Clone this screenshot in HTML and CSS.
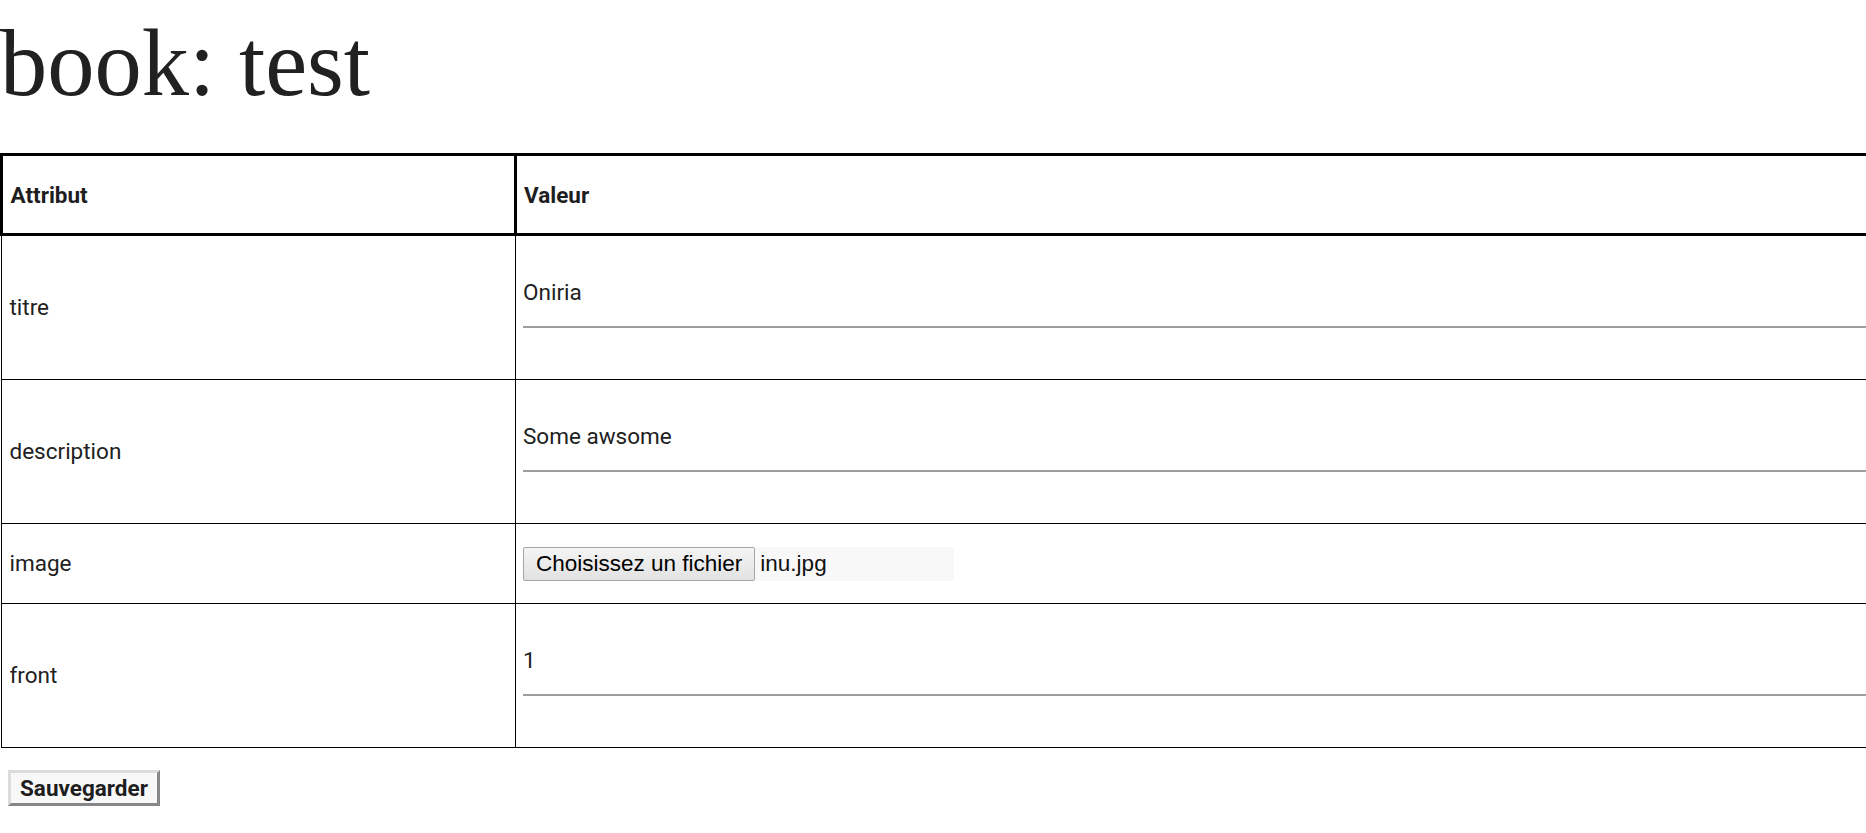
FILE: index.html
```html
<!DOCTYPE html>
<html lang="fr">
<head>
<meta charset="utf-8">
<title>book: test</title>
<link rel="stylesheet" href="styles.css">
</head>
<body>
<h1 class="title">book: test</h1>
<form class="form">
  <table class="attr-table">
    <colgroup><col class="col-attr"><col class="col-val"></colgroup>
    <thead>
      <tr><th>Attribut</th><th>Valeur</th></tr>
    </thead>
    <tbody>
      <tr>
        <td>titre</td>
        <td><div class="field"><input class="text-input" type="text" value="Oniria"></div></td>
      </tr>
      <tr>
        <td>description</td>
        <td><div class="field"><input class="text-input" type="text" value="Some awsome"></div></td>
      </tr>
      <tr>
        <td>image</td>
        <td><div class="file-input"><span class="file-btn">Choisissez un fichier</span><span class="file-name">inu.jpg</span></div></td>
      </tr>
      <tr>
        <td>front</td>
        <td><div class="field"><input class="text-input" type="text" value="1"></div></td>
      </tr>
    </tbody>
  </table>
  <div class="actions"><button class="save-btn" type="button">Sauvegarder</button></div>
</form>
</body>
</html>
```
FILE: styles.css
```css
html, body {
  margin: 0;
  padding: 0;
}
body {
  font-family: Roboto, "Liberation Sans", sans-serif;
  font-size: 22.5px;
  line-height: 1.5;
  color: #212121;
  background: #fff;
  overflow: hidden;
}
.title {
  font-family: "Liberation Serif", serif;
  font-weight: 400;
  font-size: 94.5px;
  line-height: 104px;
  margin: 11px 0 38px 0;
  color: #212121;
}
.form {
  margin: 0;
}
.attr-table {
  border-collapse: collapse;
  width: 100%;
  table-layout: fixed;
}
.col-attr {
  width: 513.5px;
}
.attr-table th,
.attr-table td {
  text-align: left;
  vertical-align: middle;
  padding: 22.5px 7.5px;
}
.attr-table th:last-child,
.attr-table td:last-child {
  padding-right: 0;
}
.attr-table th {
  border: 3px solid #000;
  font-weight: 700;
  line-height: 32px;
  color: #1e1e1e;
}
.attr-table td {
  border: 1px solid #000;
}
.attr-table th:last-child,
.attr-table td:last-child {
  border-right: 0;
}
.field {
  height: 98px;
}
.text-input {
  display: block;
  width: 100%;
  height: 67.5px;
  margin: 0;
  padding: 0;
  border: 0;
  border-bottom: 2px solid #9e9e9e;
  background: transparent;
  font-family: Roboto, "Liberation Sans", sans-serif;
  font-size: 22.5px;
  color: #212121;
  outline: none;
  box-sizing: content-box;
}
.file-input {
  display: flex;
  align-items: center;
  width: 431px;
  height: 34px;
  background: #f8f8f8;
  font-family: "Liberation Sans", Arial, sans-serif;
  font-size: 22.5px;
  line-height: 1.15;
  color: #000;
}
.file-btn {
  display: flex;
  align-items: center;
  height: 34px;
  box-sizing: border-box;
  padding: 0 12px;
  border: 1px solid #a6a6a6;
  border-radius: 2px;
  background: linear-gradient(#f4f4f4, #e2e2e2);
  color: #000;
}
.file-name {
  margin-left: 5px;
  color: #111;
}
.actions {
  padding: 22px 8px;
}
.save-btn {
  margin: 0;
  padding: 2px 9px;
  font-family: Roboto, "Liberation Sans", sans-serif;
  font-weight: 700;
  font-size: 22.5px;
  line-height: 26px;
  color: #1e1e1e;
  background: #f8f8f8;
  border: 3px solid;
  border-color: #dcdcdc #878787 #878787 #dcdcdc;
  border-radius: 0;
}
```
